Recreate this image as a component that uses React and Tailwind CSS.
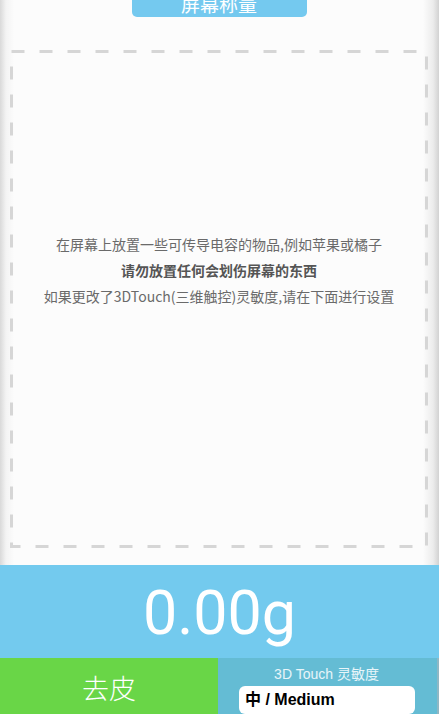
export default function App() {
  return (
    <div className="w-[439px] h-[714px] overflow-hidden flex flex-col font-['Noto_Sans_CJK_SC',sans-serif]">
      {/* top area with soft grey edges */}
      <div className="h-[565px] shrink-0 flex flex-col bg-[linear-gradient(to_right,#d9d9d9_0px,#f3f3f3_6px,#fcfcfc_14px,#fcfcfc_calc(100%-16px),#ececec_calc(100%-6px),#d2d2d2_100%)]">
        <div className="flex justify-center">
          <div className="w-[175px] h-[17px] -ml-[1px] bg-[#74c9ef] rounded-b-[5px] flex items-end justify-center overflow-hidden">
            <span className="text-white text-[19px] leading-none mb-[4px]">屏幕称量</span>
          </div>
        </div>
        <div className="relative mt-[33px] ml-[10px] mr-[11px] h-[498px]">
          <svg className="absolute inset-0" width="418" height="498">
            <rect x="1.5" y="1.5" width="415" height="495" fill="none" stroke="#d6d6d6" strokeWidth="3" strokeDasharray="13 15" />
          </svg>
          <div className="relative pt-[181px] flex flex-col items-center text-[14px] leading-[26px] text-[#6a6a6a]">
            <p>在屏幕上放置一些可传导电容的物品,例如苹果或橘子</p>
            <p className="font-bold text-[#555]">请勿放置任何会划伤屏幕的东西</p>
            <p>如果更改了3DTouch(三维触控)灵敏度,请在下面进行设置</p>
          </div>
        </div>
      </div>

      {/* weight readout */}
      <div className="h-[93px] shrink-0 bg-[#73caee] flex items-center justify-center">
        <span className="text-white text-[61px] font-normal leading-none font-['Roboto',sans-serif] mt-[3px]">0.00g</span>
      </div>

      {/* bottom controls */}
      <div className="h-[56px] shrink-0 flex">
        <div className="w-[218px] bg-[#69d647] flex items-center justify-center">
          <span className="text-white text-[27px] font-light mt-[4px]">去皮</span>
        </div>
        <div className="flex-1 bg-[#64bcd4] flex flex-col items-center pr-[2px] border-r-2 border-[#8fb7c4]">
          <span className="text-white/85 text-[14px] leading-none mt-[9px] font-['Liberation_Sans','Noto_Sans_CJK_SC',sans-serif]">3D Touch 灵敏度</span>
          <div className="mt-[5px] ml-[1px] w-[176px] h-[30px] bg-white rounded-[6px] flex items-center px-[6px]">
            <span className="text-black text-[16px] font-bold font-['Liberation_Sans','Noto_Sans_CJK_SC',sans-serif]">中 / Medium</span>
          </div>
        </div>
      </div>
    </div>
  )
}
